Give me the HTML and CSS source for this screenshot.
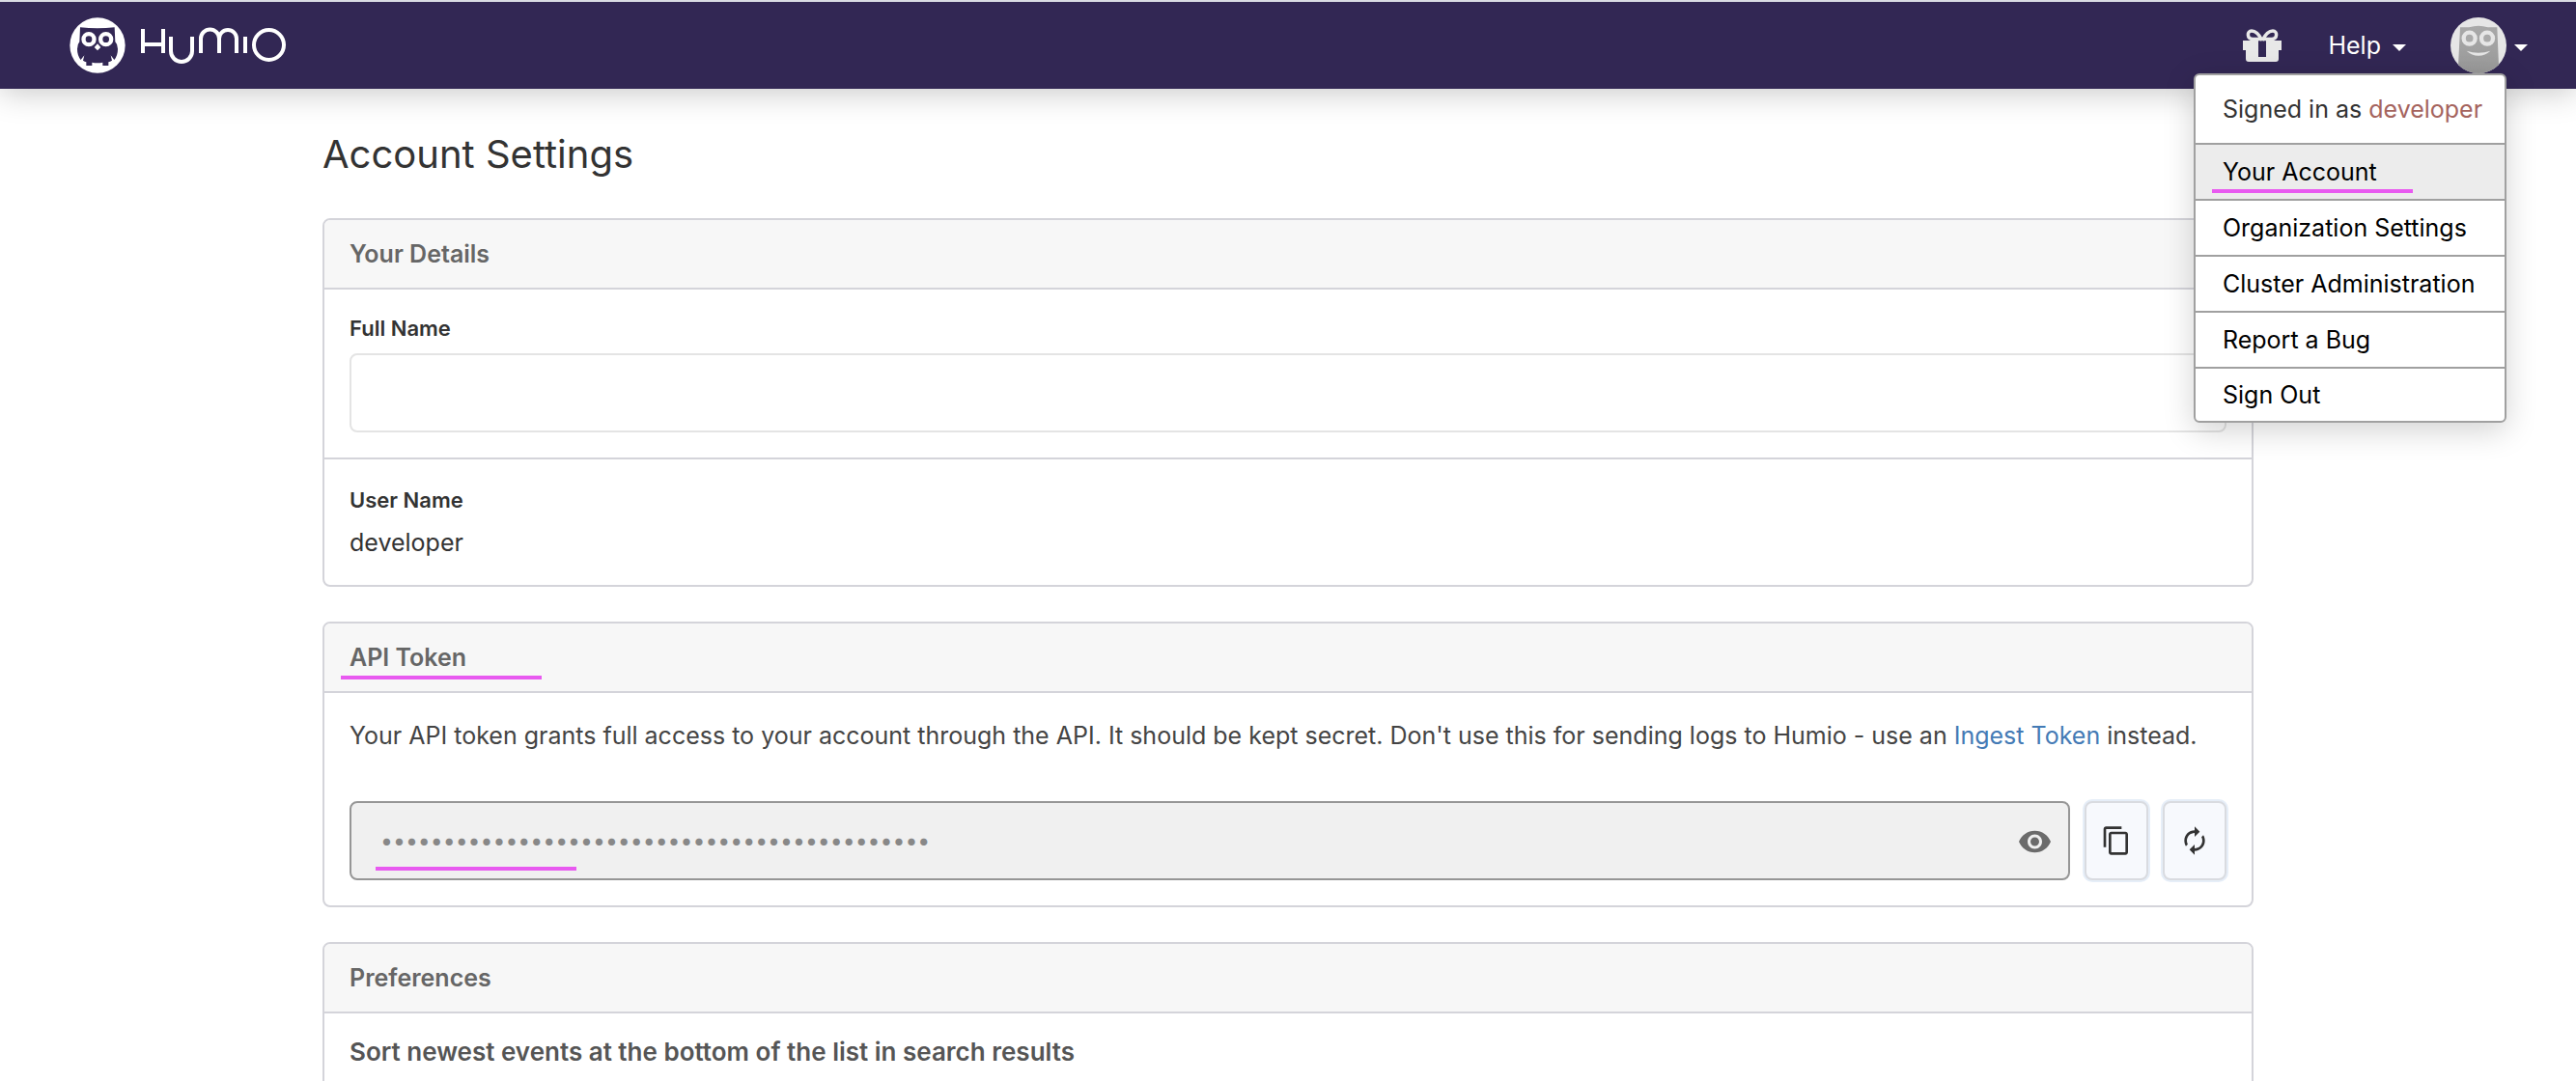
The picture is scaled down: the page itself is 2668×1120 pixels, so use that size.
FILE: index.html
```html
<!DOCTYPE html>
<html lang="en">
<head>
<meta charset="utf-8">
<title>Account Settings</title>
<link rel="stylesheet" href="styles.css">
</head>
<body>
<header class="topbar">
  <a class="brand" href="#" aria-label="Humio">
    <svg class="brand-owl" viewBox="0 0 174 174" aria-hidden="true">
      <circle cx="87" cy="87" r="86" fill="#fff"/>
      <path fill="#322754" d="M33 31Q87 37 140 31L142 76Q150 84 150 98Q150 118 139 132L128 118L132 134Q126 138 121 139V150H103V140Q87 144 70 140V150H52V139Q47 138 42 134L46 118L35 132Q24 118 24 98Q24 84 31 76Z"/>
      <circle cx="60" cy="68" r="16.500" fill="none" stroke="#fff" stroke-width="13"/>
      <circle cx="113" cy="68" r="16.500" fill="none" stroke="#fff" stroke-width="13"/>
      <path fill="#fff" d="M87 82L97 93L87 103L77 93Z"/>
    </svg>
    <svg class="brand-word" viewBox="0 0 154 38" aria-hidden="true">
      <g fill="none" stroke="#fff" stroke-width="4">
        <path d="M4 2V27M25 2V27M4 18H25"/>
        <path d="M33 10V25A11 11 0 0 0 55 25V10"/>
        <path d="M64 27V12A9 9 0 0 1 83 12V27M83 12A9 9 0 0 1 101 12V27"/>
        <path d="M110 10V27"/>
        <circle cx="134.500" cy="18.500" r="15.500"/>
      </g>
    </svg>
  </a>
  <nav class="tools" aria-label="Main">
    <button class="tool" aria-label="What's new">
      <svg class="gift" viewBox="0 0 40 34" aria-hidden="true">
        <path fill="none" stroke="#e8e8e8" stroke-width="3.500" d="M20 12C17 6 13 2 9 2C4 2 4 10 10 10.500H30C36 10 36 2 31 2C27 2 23 6 20 12"/>
        <path fill="#e8e8e8" fill-rule="evenodd" d="M0 12H40V22H37V31Q37 34 34 34H6Q3 34 3 31V22H0ZM16 12V29H24V12Z"/>
      </svg>
    </button>
    <button class="tool help">Help<span class="caret"></span></button>
    <button class="tool profile" aria-label="Account menu" aria-expanded="true">
      <svg class="avatar" viewBox="0 0 174 174" aria-hidden="true">
        <defs><clipPath id="round"><circle cx="87" cy="87" r="87"/></clipPath>
        <linearGradient id="fur" x2="0" y2="1"><stop stop-color="#a9a9a9"/><stop offset="1" stop-color="#999"/></linearGradient></defs>
        <g clip-path="url(#round)">
          <rect width="174" height="174" fill="#e6e6e6"/>
          <path fill="url(#fur)" d="M30 31H58Q87 22 116 31H145L151 174H23Z"/>
          <g fill="#aaa" stroke="#e6e6e6" stroke-width="13"><circle cx="59" cy="65" r="18"/><circle cx="114" cy="65" r="18"/></g>
          <path fill="#e6e6e6" d="M50 104Q87 116 124 104Q108 119 87 119Q66 119 50 104Z"/>
        </g>
      </svg>
      <span class="caret"></span>
    </button>
  </nav>
  <div class="menu">
    <p class="menu-head">Signed in as <span class="who">developer</span></p>
    <a class="menu-item current" href="#">Your Account</a>
    <a class="menu-item" href="#">Organization Settings</a>
    <a class="menu-item" href="#">Cluster Administration</a>
    <a class="menu-item" href="#">Report a Bug</a>
    <a class="menu-item" href="#">Sign Out</a>
  </div>
</header>

<main class="page">
  <h1 class="title">Account Settings</h1>

  <section class="card">
    <h2 class="card-head">Your Details</h2>
    <div class="field">
      <label class="label" for="full-name">Full Name</label>
      <input class="box" id="full-name" type="text">
    </div>
    <div class="field readout">
      <h3 class="label">User Name</h3>
      <p class="value">developer</p>
    </div>
  </section>

  <section class="card">
    <h2 class="card-head marked">API Token</h2>
    <div class="token">
      <p class="note">Your API token grants full access to your account through the API. It should be kept secret. Don't use this for sending logs to Humio - use an <a class="link" href="#">Ingest Token</a> instead.</p>
      <div class="token-row">
        <div class="secret">
          <input class="box secret-box" type="password" aria-label="API Token" readonly value="00000000000000000000000000000000000000000000">
          <button class="reveal" aria-label="Show token">
            <svg class="eye" viewBox="1 4 22 16" aria-hidden="true"><path fill="#6b6b6b" d="M12 4.500C7 4.500 2.730 7.610 1 12c1.730 4.390 6 7.500 11 7.500s9.270-3.110 11-7.500c-1.730-4.390-6-7.500-11-7.500zM12 17c-2.760 0-5-2.240-5-5s2.240-5 5-5 5 2.240 5 5-2.240 5-5 5zm0-8c-1.660 0-3 1.340-3 3s1.340 3 3 3 3-1.340 3-3-1.340-3-3-3z"/></svg>
          </button>
        </div>
        <button class="action" aria-label="Copy token">
          <svg class="icon" viewBox="0 0 24 24" aria-hidden="true"><path fill="#333" d="M16 1H4c-1.100 0-2 .9-2 2v14h2V3h12V1zm3 4H8c-1.100 0-2 .9-2 2v14c0 1.100.9 2 2 2h11c1.100 0 2-.9 2-2V7c0-1.100-.9-2-2-2zm0 16H8V7h11v14z"/></svg>
        </button>
        <button class="action" aria-label="Renew token">
          <svg class="icon" viewBox="0 0 24 24" aria-hidden="true"><path fill="#333" d="M12 6v3l4-4-4-4v3c-4.420 0-8 3.580-8 8 0 1.570.46 3.030 1.240 4.260L6.700 14.800c-.45-.83-.7-1.790-.7-2.800 0-3.310 2.690-6 6-6zm6.760 1.740L17.300 9.200c.44.840.7 1.790.7 2.800 0 3.310-2.690 6-6 6v-3l-4 4 4 4v-3c4.420 0 8-3.580 8-8 0-1.570-.46-3.030-1.240-4.260z"/></svg>
        </button>
      </div>
    </div>
  </section>

  <section class="card">
    <h2 class="card-head">Preferences</h2>
    <div class="prefs">
      <h3 class="pref">Sort newest events at the bottom of the list in search results</h3>
    </div>
  </section>
</main>
</body>
</html>
```
FILE: styles.css
```css
* { box-sizing: border-box; }
body {
  margin: 0;
  overflow: hidden;
  background: #fff;
  color: #333;
  font: 25px/32px Inter, "Liberation Sans", sans-serif;
}
h1, h2, h3, p { margin: 0; }
button { padding: 0; border: 0; background: none; color: inherit; font: inherit; cursor: pointer; }
a { text-decoration: none; }
svg { display: block; }

.topbar {
  position: relative;
  display: flex;
  justify-content: space-between;
  align-items: center;
  height: 92px;
  padding: 0 50px 0 72px;
  border-top: 2px solid #d9dbe3;
  background: #322754;
  box-shadow: 0 4px 32px rgba(0, 0, 0, .22);
}
.brand { display: flex; align-items: center; gap: 14px; }
.brand-owl, .avatar { width: 58px; height: 58px; }
.brand-word { width: 154px; height: 38px; }
.tools { display: flex; align-items: center; color: #fff; }
.tool { display: flex; align-items: center; }
.gift { width: 40px; height: 34px; }
.help { margin: 0 46px 0 48px; gap: 12px; }
.profile { gap: 8px; }
.caret {
  margin-top: 4px;
  border: 7px solid transparent;
  border-top-color: #fff;
  border-bottom: 0;
}

.menu {
  position: absolute;
  z-index: 2;
  top: 74px;
  right: 72px;
  width: 324px;
  border: 2px solid #a0a0a0;
  border-radius: 6px;
  background: #fff;
  box-shadow: 0 8px 32px rgba(0, 0, 0, .18);
  overflow: hidden;
}
.menu-head { padding: 19px 28px; white-space: nowrap; }
.who { color: #a5645e; }
.menu-item {
  position: relative;
  display: block;
  padding: 12px 28px;
  border-top: 2px solid #a0a0a0;
  color: #000;
}
.menu-item:last-child { padding: 11px 28px; }
.menu-item.current { background: #ececec; }

.current::after, .marked::after, .secret::after {
  content: "";
  position: absolute;
  left: 17px;
  bottom: 6px;
  width: 208px;
  height: 4px;
  background: #e85af0;
}

.page { max-width: 2000px; margin: 0 auto; padding: 40px 0; }
.title { margin-bottom: 38px; font-size: 40px; line-height: 56px; font-weight: 400; }
.card {
  margin-bottom: 36px;
  border: 2px solid #d4d4da;
  border-radius: 8px;
  overflow: hidden;
}
.card-head {
  position: relative;
  padding: 19px 26px;
  background: #f7f7f7;
  color: #666;
  font-size: 25px;
  line-height: 32px;
  font-weight: 600;
}
.marked::after { bottom: 12px; }
.field { padding: 26px; border-top: 2px solid #d4d4da; }
.readout { padding: 28px 26px; }
.label { display: block; font-size: 22px; line-height: 28px; font-weight: 600; }
.box {
  display: block;
  width: 100%;
  height: 82px;
  padding: 0 30px;
  border: 2px solid #e4e4e4;
  border-radius: 8px;
  background: #fff;
  font: inherit;
}
.label + .box { margin-top: 12px; }
.value { margin-top: 14px; }
.token { padding: 28px 26px 26px; border-top: 2px solid #d4d4da; }
.note { margin-bottom: 52px; color: #444; }
.link { color: #447ab5; }
.token-row { display: flex; gap: 15px; }
.secret { position: relative; flex: 1; }
.secret::after { left: 27px; bottom: 10px; }
.secret-box { border-color: #969696; background: #f0f0f0; color: #888; font-size: 23px; }
.reveal { position: absolute; top: 30px; right: 20px; }
.eye { width: 33px; height: 24px; }
.action {
  display: grid;
  place-items: center;
  width: 66px;
  border: 2px solid #d9dbe0;
  border-radius: 8px;
  background: #f7f9fd;
  box-shadow: 0 0 0 2px #e6eef8;
}
.icon { width: 32px; height: 32px; }
.prefs { padding: 24px 26px; border-top: 2px solid #d4d4da; }
.pref { color: #555; font-size: 26px; line-height: 32px; font-weight: 600; }
```
